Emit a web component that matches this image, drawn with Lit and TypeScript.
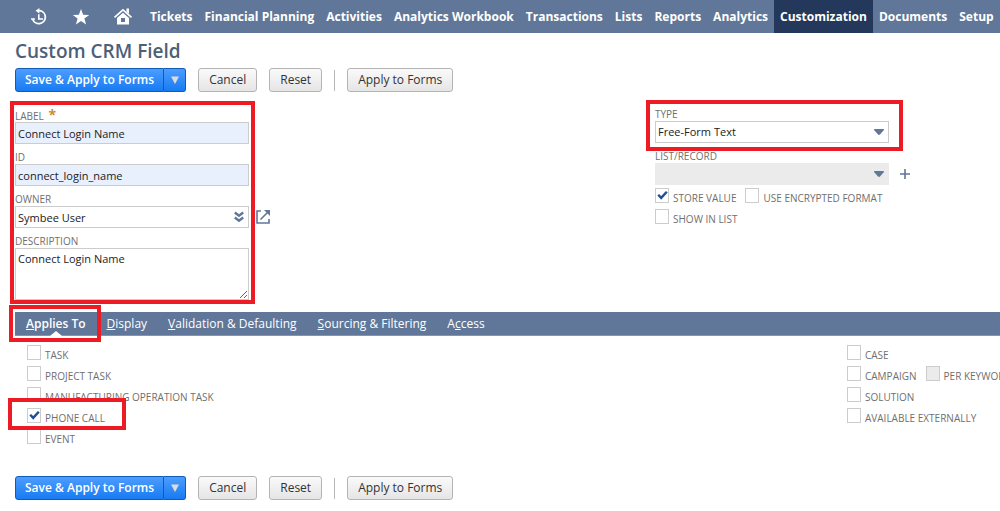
import { LitElement, html, css, nothing } from "lit";
import { customElement, property } from "lit/decorators.js";

const NAV_ITEMS = [
  "Tickets",
  "Financial Planning",
  "Activities",
  "Analytics Workbook",
  "Transactions",
  "Lists",
  "Reports",
  "Analytics",
  "Customization",
  "Documents",
  "Setup",
];

const base = css`
  * {
    box-sizing: border-box;
  }
  button,
  input,
  select,
  textarea {
    font-family: inherit;
    margin: 0;
  }
`;

@customElement("nav-bar")
class NavBar extends LitElement {
  static styles = [
    base,
    css`
      :host {
        display: block;
        background: #607799;
      }
      .bar {
        display: flex;
        height: 33px;
        padding-left: 18px;
      }
      .icon {
        display: flex;
        flex: none;
        align-items: center;
        justify-content: center;
        width: 42px;
        color: #fff;
      }
      .link {
        display: flex;
        align-items: center;
        padding: 0 6px;
        color: #fff;
        font-size: 12px;
        font-weight: 700;
        line-height: 16px;
        text-decoration: none;
        white-space: nowrap;
      }
      .current {
        background: #24385b;
      }
    `,
  ];

  render() {
    return html`<nav class="bar">
      <a class="icon" href="#" aria-label="Recent records">
        <svg width="18" height="18" viewBox="0 0 18 18" fill="none" stroke="currentColor">
          <path d="M8.200 2.700H10A6.500 6.500 0 1 1 2.600 11" stroke-width="1.800" />
          <path d="M1 11h4" stroke-width="1.400" />
          <path d="M9.400 0v5.400L5.600 2.700z" fill="currentColor" stroke="none" />
          <path d="M8.800 6.200v4.800h4.200" stroke-width="1.600" />
        </svg>
      </a>
      <a class="icon" href="#" aria-label="Shortcuts">
        <svg width="18" height="18" viewBox="0 0 18 18" fill="currentColor">
          <path d="M9 1l2.100 5.700 6.100.2-4.800 3.700 1.700 5.900L9 13.100l-5.100 3.400 1.700-5.900L.8 6.900l6.100-.2z" />
        </svg>
      </a>
      <a class="icon" href="#" aria-label="Home">
        <svg width="20" height="18" viewBox="0 0 20 18">
          <path d="M1.500 9.300L10 1.800l8.500 7.500" fill="none" stroke="#fff" stroke-width="1.700" />
          <path d="M13.500 .5h2.500v5.400l-2.500-2.200z" fill="#fff" />
          <path d="M10 4.800l6 5.300V16.500H4V10.100z" fill="#fff" />
          <path d="M8 10h4v4H8z" fill="#607799" />
        </svg>
      </a>
      ${NAV_ITEMS.map(
        (t) => html`<a
          class="link ${t === "Customization" ? "current" : ""}"
          href="#"
          aria-current=${t === "Customization" ? "page" : nothing}
          >${t}</a
        >`
      )}
    </nav>`;
  }
}

@customElement("action-bar")
class ActionBar extends LitElement {
  static styles = [
    base,
    css`
      :host {
        display: block;
      }
      .row {
        display: flex;
        align-items: center;
        gap: 12px;
      }
      .btn {
        height: 24px;
        padding: 0 10px;
        border: 1px solid #b4b4b4;
        border-radius: 3px;
        background: linear-gradient(#fafafa, #e5e5e5);
        color: #333;
        font-size: 12px;
        font-weight: 500;
        line-height: 16px;
        white-space: nowrap;
      }
      .split {
        display: flex;
      }
      .primary {
        border-color: #125ab2;
        background: linear-gradient(#4c9dff, #187bf2);
        color: #fff;
        font-weight: 600;
      }
      .main {
        padding: 0 9px;
        border-radius: 3px 0 0 3px;
      }
      .more {
        display: flex;
        align-items: center;
        justify-content: center;
        width: 22px;
        padding: 0;
        border-left: 0;
        border-radius: 0 3px 3px 0;
      }
      .rule {
        width: 1px;
        height: 21px;
        background: #b8b8b8;
      }
    `,
  ];

  render() {
    return html`<div class="row">
      <div class="split">
        <button class="btn primary main">Save &amp; Apply to Forms</button>
        <button class="btn primary more" aria-label="More save options">
          <svg width="8" height="8" viewBox="0 0 8 8"><path d="M0 .5h8L4 8z" fill="#dcdcdc" /></svg>
        </button>
      </div>
      <button class="btn">Cancel</button>
      <button class="btn">Reset</button>
      <span class="rule"></span>
      <button class="btn">Apply to Forms</button>
    </div>`;
  }
}

@customElement("tick-box")
class TickBox extends LitElement {
  @property() label = "";
  @property({ type: Boolean }) checked = false;
  @property({ type: Boolean }) disabled = false;

  static styles = [
    base,
    css`
      :host {
        display: block;
      }
      .tick {
        display: flex;
        gap: 4px;
        height: 21px;
        white-space: nowrap;
      }
      .stack {
        display: grid;
        width: 14px;
        height: 15px;
      }
      .box {
        grid-area: 1 / 1;
        appearance: none;
        width: 14px;
        height: 15px;
        border: 1px solid #ccc;
        background: #fff;
      }
      .box:disabled {
        background: #ebebeb;
      }
      .mark {
        grid-area: 1 / 1;
        place-self: center;
        pointer-events: none;
      }
      .text {
        padding-top: 3px;
        color: #6f6f6f;
        font-size: 10px;
        line-height: 14px;
      }
    `,
  ];

  render() {
    return html`<label class="tick">
      <span class="stack">
        <input class="box" type="checkbox" .checked=${this.checked} ?disabled=${this.disabled} />
        ${this.checked
          ? html`<svg class="mark" width="11" height="11" viewBox="0 0 11 11">
              <path d="M1.200 4.700l3 3.200 5.600-6.200" fill="none" stroke="#1f4f98" stroke-width="2.400" />
            </svg>`
          : nothing}
      </span>
      <span class="text">${this.label}</span>
    </label>`;
  }
}

@customElement("app-root")
class AppRoot extends LitElement {
  static styles = [
    base,
    css`
      :host {
        display: block;
        overflow: hidden;
        background: #fff;
        color: #222;
        font-family: "Open Sans", "Noto Sans", sans-serif;
        font-size: 11px;
      }
      .page {
        padding-left: 15px;
      }
      .title {
        margin: 0;
        padding: 6px 0 5px;
        color: #4d5f79;
        font-size: 19px;
        font-weight: 600;
        line-height: 24px;
      }
      .form {
        display: flex;
        justify-content: space-between;
        padding-top: 9px;
      }
      .left {
        position: relative;
        width: 234px;
      }
      .right {
        width: 345px;
      }
      .group {
        position: relative;
        width: 234px;
      }
      .caption {
        display: block;
        height: 20px;
        padding-top: 6px;
        color: #6f6f6f;
        font-size: 10px;
        line-height: 14px;
      }
      .required {
        height: 21px;
        padding-top: 7px;
      }
      .star {
        padding-left: 2px;
        color: #d08a2e;
        font-size: 14px;
        font-weight: 700;
      }
      .field {
        display: grid;
        flex: none;
        align-items: center;
        width: 234px;
      }
      .control {
        grid-area: 1 / 1;
        display: block;
        width: 100%;
        height: 22px;
        padding: 0 2px;
        border: 1px solid #ccc;
        border-radius: 0;
        background: #fff;
        color: #222;
        font-size: 11px;
        line-height: 16px;
      }
      .filled {
        background: #e8f0fe;
      }
      .drop {
        appearance: none;
        opacity: 1;
      }
      .drop:disabled {
        border-color: #ebebeb;
        background: #ebebeb;
      }
      .area {
        height: 52px;
        padding-top: 2px;
      }
      .glyph {
        grid-area: 1 / 1;
        justify-self: end;
        margin-right: 5px;
        pointer-events: none;
      }
      .with-action {
        display: flex;
        align-items: center;
      }
      .action {
        display: flex;
        flex: none;
        margin-left: 7px;
        padding: 0;
        border: 0;
        background: none;
      }
      .add {
        margin-left: 10px;
      }
      .ticks {
        display: flex;
        gap: 9px;
      }
      .options {
        padding-top: 3px;
      }
      .mark {
        position: absolute;
        border: 4px solid #ed1c24;
        pointer-events: none;
      }
      .mark-fields {
        inset: 0 -6px -4px -5px;
      }
      .mark-type {
        inset: -1px -14px -8px -9px;
      }
      .mark-tab {
        inset: -7px -15px -7px -17px;
      }
      .mark-phone {
        inset: -10px -21px -1px -19px;
      }
      .tabs {
        display: flex;
        gap: 21px;
        height: 24px;
        margin-top: 12px;
        padding-left: 11px;
        border-bottom: 1px solid #8396b1;
        background: #607799;
      }
      .tab {
        position: relative;
        display: flex;
        align-items: center;
        color: #fff;
        font-size: 12px;
        font-weight: 400;
        line-height: 16px;
        text-decoration: none;
        white-space: pre;
      }
      .selected {
        font-weight: 600;
      }
      .pointer {
        position: absolute;
        bottom: -1px;
        left: 50%;
        margin-left: -6px;
      }
      .panel {
        display: flex;
        padding: 9px 0 26px 12px;
      }
      .first {
        flex: 1;
      }
      .second {
        flex: none;
        width: 153px;
      }
      .marked {
        position: relative;
        width: max-content;
      }
    `,
  ];

  private tab(before: string, key: string, after: string, selected = false) {
    return html`<a class="tab ${selected ? "selected" : ""}" href="#"
      ><span>${before}<u>${key}</u>${after}</span>${selected
        ? html`<svg class="pointer" width="12" height="5" viewBox="0 0 12 5">
              <path d="M0 5l6-5 6 5z" fill="#fff" />
            </svg>
            <span class="mark mark-tab"></span>`
        : nothing}</a
    >`;
  }

  private arrow() {
    return html`<svg class="glyph" width="10" height="6" viewBox="0 0 10 6">
      <path d="M.5 0h9q.7.6.2 1.300L6 5.500q-1 .8-2 0L.3 1.300Q-.2.600.5 0z" fill="#607799" />
    </svg>`;
  }

  render() {
    return html`
      <nav-bar></nav-bar>
      <main class="page">
        <h1 class="title">Custom CRM Field</h1>
        <action-bar></action-bar>

        <form class="form">
          <div class="left">
            <label class="caption required" for="label">LABEL <span class="star">*</span></label>
            <div class="field">
              <input class="control filled" id="label" type="text" value="Connect Login Name" />
            </div>
            <label class="caption" for="id">ID</label>
            <div class="field">
              <input class="control filled" id="id" type="text" value="connect_login_name" />
            </div>
            <label class="caption" for="owner">OWNER</label>
            <div class="with-action">
              <div class="field">
                <input class="control" id="owner" type="text" value="Symbee User" />
                <svg class="glyph" width="10" height="12" viewBox="0 0 10 12">
                  <path d="M.8 1.500L5 4.700l4.200-3.200M.8 6.500L5 9.700l4.200-3.200" fill="none" stroke="#607799" stroke-width="2.400" />
                </svg>
              </div>
              <button class="action" type="button" aria-label="Open owner">
                <svg width="14" height="14" viewBox="0 0 14 14" fill="none" stroke="#607799" stroke-width="1.600">
                  <path d="M5 1H1v12h12V9M4.500 9.500l7-7" />
                  <path d="M8 0h6v6z" fill="#607799" stroke="none" />
                </svg>
              </button>
            </div>
            <label class="caption" for="description">DESCRIPTION</label>
            <div class="field">
              <textarea class="control area" id="description" .value=${"Connect Login Name"}></textarea>
            </div>
            <span class="mark mark-fields"></span>
          </div>

          <div class="right">
            <div class="group">
              <label class="caption" for="type">TYPE</label>
              <div class="field">
                <select class="control drop" id="type">
                  <option>Free-Form Text</option>
                </select>
                ${this.arrow()}
              </div>
              <span class="mark mark-type"></span>
            </div>
            <label class="caption" for="list">LIST/RECORD</label>
            <div class="with-action">
              <div class="field">
                <select class="control drop" id="list" disabled></select>
                ${this.arrow()}
              </div>
              <button class="action add" type="button" aria-label="New list">
                <svg width="12" height="12" viewBox="0 0 12 12">
                  <path d="M6 1v10M1 6h10" stroke="#607799" stroke-width="1.600" />
                </svg>
              </button>
            </div>
            <div class="options">
              <div class="ticks">
                <tick-box label="STORE VALUE" checked></tick-box>
                <tick-box label="USE ENCRYPTED FORMAT"></tick-box>
              </div>
              <tick-box label="SHOW IN LIST"></tick-box>
            </div>
          </div>
        </form>

        <nav class="tabs">
          ${this.tab("", "A", "pplies To", true)} ${this.tab("", "D", "isplay")}
          ${this.tab("", "V", "alidation & Defaulting")} ${this.tab("", "S", "ourcing & Filtering")}
          ${this.tab("A", "c", "cess")}
        </nav>

        <section class="panel">
          <div class="first">
            <tick-box label="TASK"></tick-box>
            <tick-box label="PROJECT TASK"></tick-box>
            <tick-box label="MANUFACTURING OPERATION TASK"></tick-box>
            <div class="marked">
              <tick-box label="PHONE CALL" checked></tick-box>
              <span class="mark mark-phone"></span>
            </div>
            <tick-box label="EVENT"></tick-box>
          </div>
          <div class="second">
            <tick-box label="CASE"></tick-box>
            <div class="ticks">
              <tick-box label="CAMPAIGN"></tick-box>
              <tick-box label="PER KEYWORD" disabled></tick-box>
            </div>
            <tick-box label="SOLUTION"></tick-box>
            <tick-box label="AVAILABLE EXTERNALLY"></tick-box>
          </div>
        </section>

        <action-bar></action-bar>
      </main>
    `;
  }
}
